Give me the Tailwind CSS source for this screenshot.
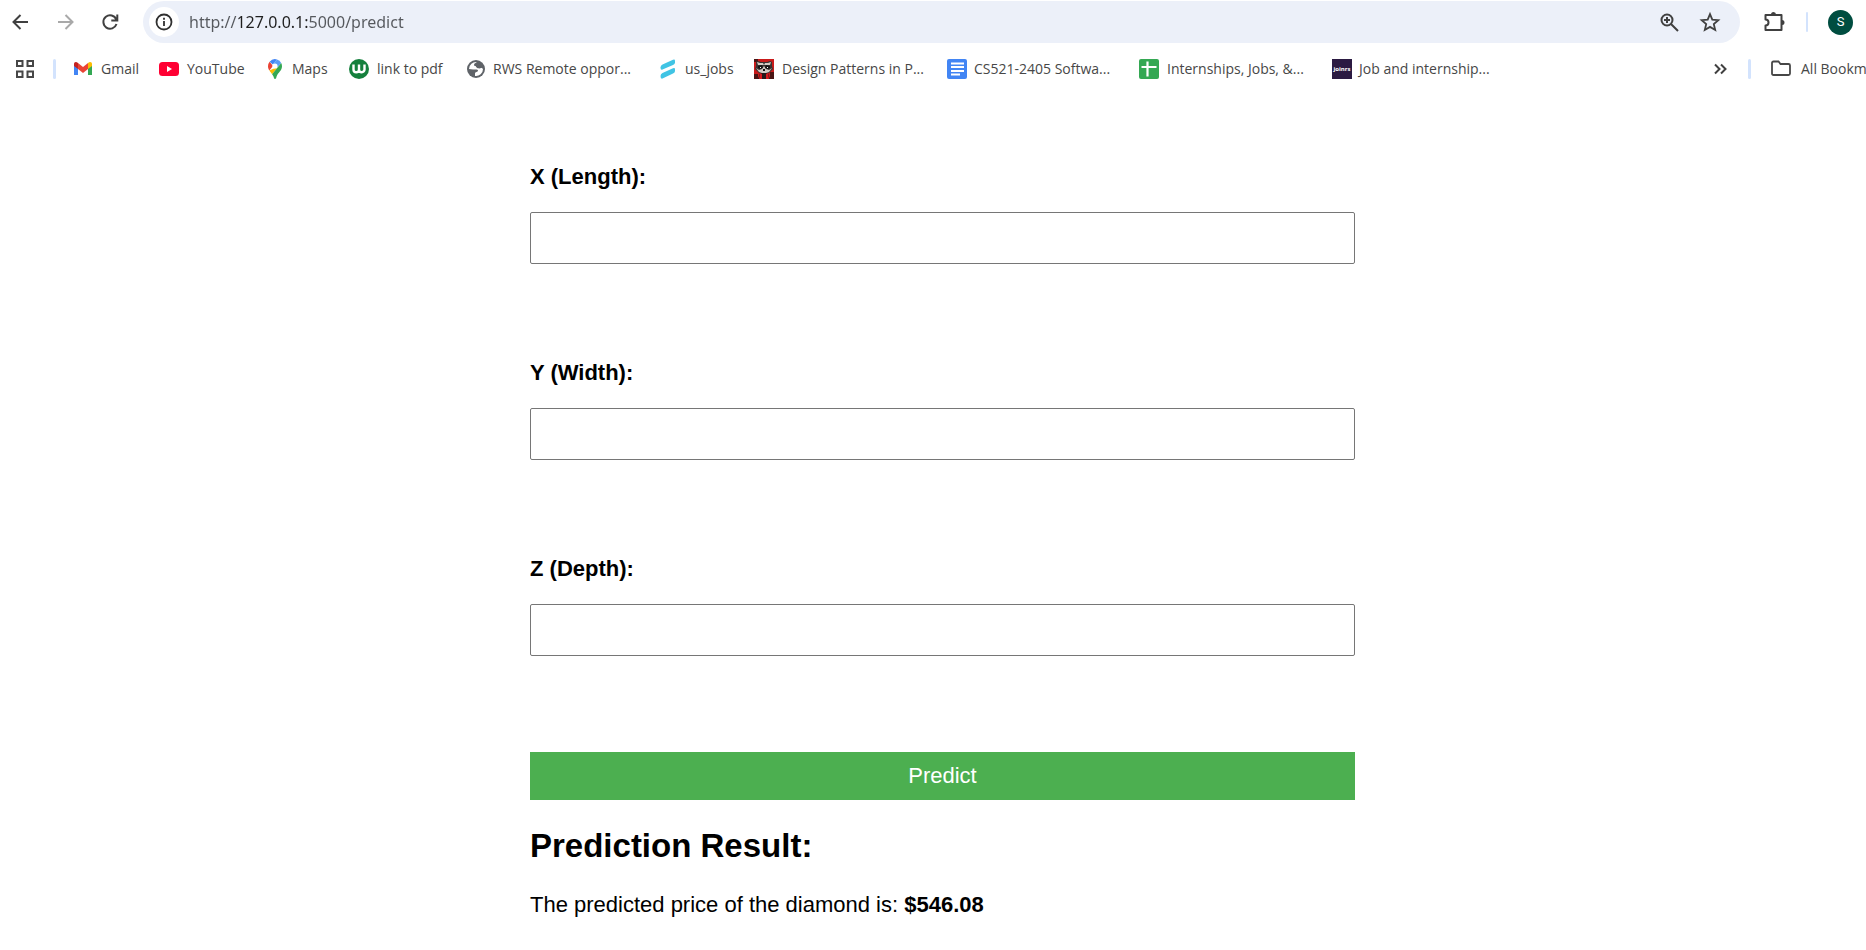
<!DOCTYPE html>
<html lang="en">
<head>
<meta charset="utf-8">
<title>Diamond price prediction</title>
<script src="https://cdn.jsdelivr.net/npm/@tailwindcss/browser@4"></script>
</head>
<body class="min-h-screen overflow-x-hidden bg-white font-['Liberation_Sans',Arial,sans-serif] text-[22px] text-black">

<header class="overflow-hidden font-['Open_Sans','Noto_Sans',sans-serif] text-[#474747]">
  <!-- Toolbar -->
  <div class="flex h-11 items-center pt-px pb-px">
    <nav class="flex shrink-0 gap-[21px] pl-2" aria-label="Navigation">
      <button type="button" aria-label="Back" class="flex size-6 items-center justify-center">
        <svg class="size-6" viewBox="0 0 24 24" fill="none" stroke="#404040" stroke-width="2"><path d="M20 12H6M12.500 5L5.500 12l7 7"/></svg>
      </button>
      <button type="button" aria-label="Forward" class="flex size-6 items-center justify-center">
        <svg class="size-6" viewBox="0 0 24 24" fill="none" stroke="#a9a9a9" stroke-width="2"><path d="M5 12h14M12.500 5l7 7-7 7"/></svg>
      </button>
      <button type="button" aria-label="Reload" class="flex size-6 items-center justify-center">
        <svg class="size-6" viewBox="0 0 24 24" fill="none" stroke="#404040" stroke-width="2"><path d="M18.300 9.500A6.700 6.700 0 1 0 18.500 14M19.300 4.500v6h-6"/></svg>
      </button>
    </nav>
    <form class="ml-[21px] flex h-[42px] min-w-0 flex-1 items-center rounded-full bg-[#ecf0f9] pr-[18px] pl-[6px]">
      <button type="button" aria-label="Site information" class="flex size-[30px] shrink-0 items-center justify-center rounded-full bg-white">
        <svg class="size-5" viewBox="0 0 20 20" fill="none" stroke="#303030" stroke-width="1.800"><circle cx="10" cy="10" r="7.500"/><path d="M10 9v5M10 5.800v2"/></svg>
      </button>
      <div class="ml-[10px] min-w-0 flex-1 font-['Noto_Sans',sans-serif] text-base leading-6">
        <!-- The host part of the address is darker than the rest -->
        <input aria-label="Address" value="http://127.0.0.1:5000/predict" class="block w-full bg-[linear-gradient(to_right,#55585d_50px,#1f1f1f_50px,#1f1f1f_119px,#55585d_119px)] bg-clip-text text-transparent caret-black outline-none">
      </div>
      <button type="button" aria-label="Zoom" class="flex size-6 shrink-0 items-center justify-center">
        <svg class="size-6" viewBox="0 0 24 24" fill="none" stroke="#404040" stroke-width="2"><circle cx="10" cy="10" r="5.500"/><path d="M14 14l7 7M10 7v6M7 10h6"/></svg>
      </button>
      <button type="button" aria-label="Bookmark this tab" class="ml-[17px] flex size-6 shrink-0 items-center justify-center">
        <svg class="size-6" viewBox="0 0 24 24" fill="none" stroke="#404040" stroke-width="1.800"><path d="M12 4.200l2.300 5.500 6 .5-4.500 3.900 1.400 5.900-5.200-3.100-5.200 3.100 1.400-5.900-4.500-3.900 6-.5z"/></svg>
      </button>
    </form>
    <div class="flex shrink-0 items-center pr-[13px]">
      <button type="button" aria-label="Extensions" class="ml-[22px] flex size-6 items-center justify-center">
        <svg class="size-6" viewBox="0 0 24 24"><path d="M3.500 5h16v15h-16v-4.500c4 0 4-6 0-6z" fill="none" stroke="#404040" stroke-width="2" stroke-linejoin="round"/><path d="M9 4.500a2.500 2.500 0 0 1 5 0zM20 10a2.500 2.500 0 0 1 0 5z" fill="#404040"/></svg>
      </button>
      <span class="ml-5 h-5 w-0.5 rounded-full bg-[#d3e3fd]"></span>
      <button type="button" aria-label="Profile" class="ml-5 flex size-[25px] items-center justify-center rounded-full bg-[#004d40] font-['Roboto',sans-serif] text-[13px] text-white">S</button>
    </div>
  </div>

  <!-- Bookmarks -->
  <nav class="flex h-[50px] items-center text-sm whitespace-nowrap" aria-label="Bookmarks">
    <button type="button" aria-label="Apps" class="ml-[15px] shrink-0">
      <svg class="size-5" viewBox="0 0 20 20" fill="none" stroke="#474747" stroke-width="2"><path d="M2 2h5.500v5H2zM12.500 2H18v5h-5.500zM2 12.500h5.500V18H2zM12.500 12.500H18V18h-5.500z"/></svg>
    </button>
    <span class="mr-[17px] ml-[18px] h-5 w-[3px] shrink-0 rounded-full bg-[#d3e3fd]"></span>

    <a href="#" class="flex w-[86px] shrink-0 items-center gap-2">
      <svg class="size-5 shrink-0" viewBox="0 0 20 20"><path d="M1 5v11h4V8z" fill="#4285f4"/><path d="M15 8v8h4V5z" fill="#34a853"/><path d="M5 4v6l5 4 5-4V4l-5 4z" fill="#ea4335"/><path d="M1 5v2l4 3V4C3 2 1 3 1 5z" fill="#c5221f"/><path d="M15 4v6l4-3V5c0-2-2-3-4-1z" fill="#fbbc04"/></svg>
      Gmail
    </a>
    <a href="#" class="flex w-[106px] shrink-0 items-center gap-2">
      <svg class="size-5 shrink-0" viewBox="0 0 20 20"><rect y="3" width="20" height="14" rx="3.500" fill="#ff0033"/><path d="M8 7v6l5-3z" fill="#fff"/></svg>
      YouTube
    </a>
    <a href="#" class="flex w-[84px] shrink-0 items-center gap-[7px]">
      <svg class="size-5 shrink-0" viewBox="0 0 20 20"><path d="M4.600 2.700A7 7 0 0 0 3 7.300c0 1.700.6 3 1.300 4.200L8 7z" fill="#ea4335"/><path d="M4.600 2.700A7 7 0 0 1 12 .4L7.800 5.500z" fill="#4285f4"/><path d="M12 .4a7 7 0 0 1 4.200 3.600L12 9l-4-4z" fill="#5b9cf5"/><path d="M4.300 11.500c.8 1.300 1.900 2.400 2.800 3.700L13 8l-4 1.500z" fill="#fbbc04"/><path d="M16.200 4c.5 1 .8 2 .8 3.300 0 4.700-4 6.100-5.500 10.400-.4 1.300-.5 2.300-1.500 2.300s-1-1.200-1.500-2.400c-.3-.9-.8-1.600-1.400-2.400z" fill="#34a853"/><circle cx="10" cy="7" r="2.600" fill="#fff"/></svg>
      Maps
    </a>
    <a href="#" class="flex w-[117px] shrink-0 items-center gap-2">
      <svg class="size-5 shrink-0" viewBox="0 0 20 20"><circle cx="10" cy="10" r="10" fill="#15803d"/><path d="M4.500 5.500v5a2.750 2.750 0 0 0 5.500 0v-5M10 10.500a2.750 2.750 0 0 0 5.500 0v-5" fill="none" stroke="#fff" stroke-width="2.400"/></svg>
      link to pdf
    </a>
    <a href="#" class="flex w-[192px] shrink-0 items-center gap-[7px]">
      <svg class="size-5 shrink-0" viewBox="0 0 20 20"><circle cx="10" cy="10" r="9" fill="#5f6368"/><path d="M11 3c-1 1-3 1-3 3 0 1.200 2 .7 2.500 2 .4 1.200 2 1.500 3.500 1 1.200-.4 2 .2 3 1a7 7 0 0 1-8 7v-2.500c0-1.500 3-1.500 3-3C12 10 9 10.500 7 10.500L3 10a7 7 0 0 1 8-7z" fill="#fff"/><path d="M10 4h4l-1 3 3 1-2 1.500L10 8z" fill="#5f6368"/></svg>
      RWS Remote oppor...
    </a>
    <a href="#" class="flex w-[96px] shrink-0 items-center gap-[7px]">
      <svg class="size-5 shrink-0" viewBox="0 0 20 20" fill="#40c4e4"><path d="M2.500 8.500Q2.500 6.500 4.500 5.500L15 .8Q17 0 17 2v1.500q0 1.500-2 2.500L4.500 10.500q-2 .8-2-2z"/><path d="M2.500 17Q2.500 15 4.500 14L15 9.200q2-.8 2 1V12q0 1.500-2 2.500L4.500 19.500q-2 .8-2-2.500z"/></svg>
      us_jobs
    </a>
    <a href="#" class="flex w-[193px] shrink-0 items-center gap-2">
      <svg class="size-5 shrink-0" viewBox="0 0 20 20"><path d="M0 0h20v20H0z" fill="#c91a1a"/><path d="M0 0h4v3H0zM16 13h4v7h-4zM0 15h4v5H0z" fill="#4a1514"/><path d="M2 3l2-1 3 1h6l3-1 2 1v4l1 3-4 4H5l-4-4 1-3z" fill="#393332"/><path d="M3 3l3 1-2 2zM17 3l-3 1 2 2zM6 4h3l1 2 1-2h3l2 2H4zM2 9l3 2 3-1 2-3 2 3 3 1 3-2-3 4-3 1H8l-3-1z" fill="#d2cbc3"/><path d="M4 7l4-1 1 3-3 1-2-1zM16 7l-4-1-1 3 3 1 2-1zM9 10h2v2H9z" fill="#161414"/><path d="M6 8h1v1H6zM13 8h1v1h-1z" fill="#fff"/><path d="M6 14h8l2 6H4z" fill="#251919"/><path d="M6 14l2 1v5H5zM12 15l2-1 1 6h-3z" fill="#d7191b"/></svg>
      Design Patterns in P...
    </a>
    <a href="#" class="flex w-[192px] shrink-0 items-center gap-[7px]">
      <svg class="size-5 shrink-0" viewBox="0 0 20 20"><rect width="20" height="20" rx="2" fill="#4285f4"/><path d="M4 4.500h13M4 8h13M4 12h13M4 15.500h9" stroke="#fff" stroke-width="1.900"/></svg>
      CS521-2405 Softwa...
    </a>
    <a href="#" class="flex w-[193px] shrink-0 items-center gap-2">
      <svg class="size-5 shrink-0" viewBox="0 0 20 20"><rect width="20" height="20" rx="2" fill="#34a853"/><path d="M2.500 8h15M8.500 2.500v15" stroke="#fff" stroke-width="2.200"/></svg>
      Internships, Jobs, &amp;...
    </a>
    <a href="#" class="flex shrink-0 items-center gap-[7px]">
      <span class="flex size-5 shrink-0 items-center justify-center bg-[#2b1a42] text-[6px] font-bold text-white">joinrs</span>
      Job and internship...
    </a>

    <div class="ml-auto flex w-[156px] shrink-0 items-center">
      <button type="button" aria-label="More bookmarks" class="shrink-0">
        <svg class="size-5" viewBox="0 0 20 20" fill="none" stroke="#404040" stroke-width="2"><path d="M5 5.500L9.500 10 5 14.500M11 5.500l4.500 4.500-4.500 4.500"/></svg>
      </button>
      <span class="ml-[18px] h-5 w-[3px] shrink-0 rounded-full bg-[#d3e3fd]"></span>
      <a href="#" class="ml-5 flex shrink-0 items-center gap-[10px]">
        <svg class="size-5" viewBox="0 0 20 20" fill="none" stroke="#474747" stroke-width="1.800"><path d="M1 4Q1 2.500 2.500 2.500h5L9.500 5h8Q19 5 19 6.500v8q0 1.500-1.500 1.500h-15Q1 16 1 14.500z"/></svg>
        All Bookmarks
      </a>
    </div>
  </nav>
</header>

<main class="pt-[70px] pl-[19px] leading-[26px]">
  <div class="mx-auto max-w-[825px]">
    <form>
      <div class="mb-24">
        <label for="x" class="mb-[22px] block font-bold">X (Length):</label>
        <input id="x" name="x" type="text" class="block h-[52px] w-full rounded-xs border border-[#767676] bg-white px-3">
      </div>
      <div class="mb-24">
        <label for="y" class="mb-[22px] block font-bold">Y (Width):</label>
        <input id="y" name="y" type="text" class="block h-[52px] w-full rounded-xs border border-[#767676] bg-white px-3">
      </div>
      <div class="mb-24">
        <label for="z" class="mb-[22px] block font-bold">Z (Depth):</label>
        <input id="z" name="z" type="text" class="block h-[52px] w-full rounded-xs border border-[#767676] bg-white px-3">
      </div>
      <button type="button" class="block h-12 w-full bg-[#4caf50] text-white">Predict</button>
    </form>
    <h2 class="mt-[27px] text-[33px] leading-[38px] font-bold">Prediction Result:</h2>
    <p class="mt-[27px]">The predicted price of the diamond is: <strong>$546.08</strong></p>
  </div>
</main>
</body>
</html>
